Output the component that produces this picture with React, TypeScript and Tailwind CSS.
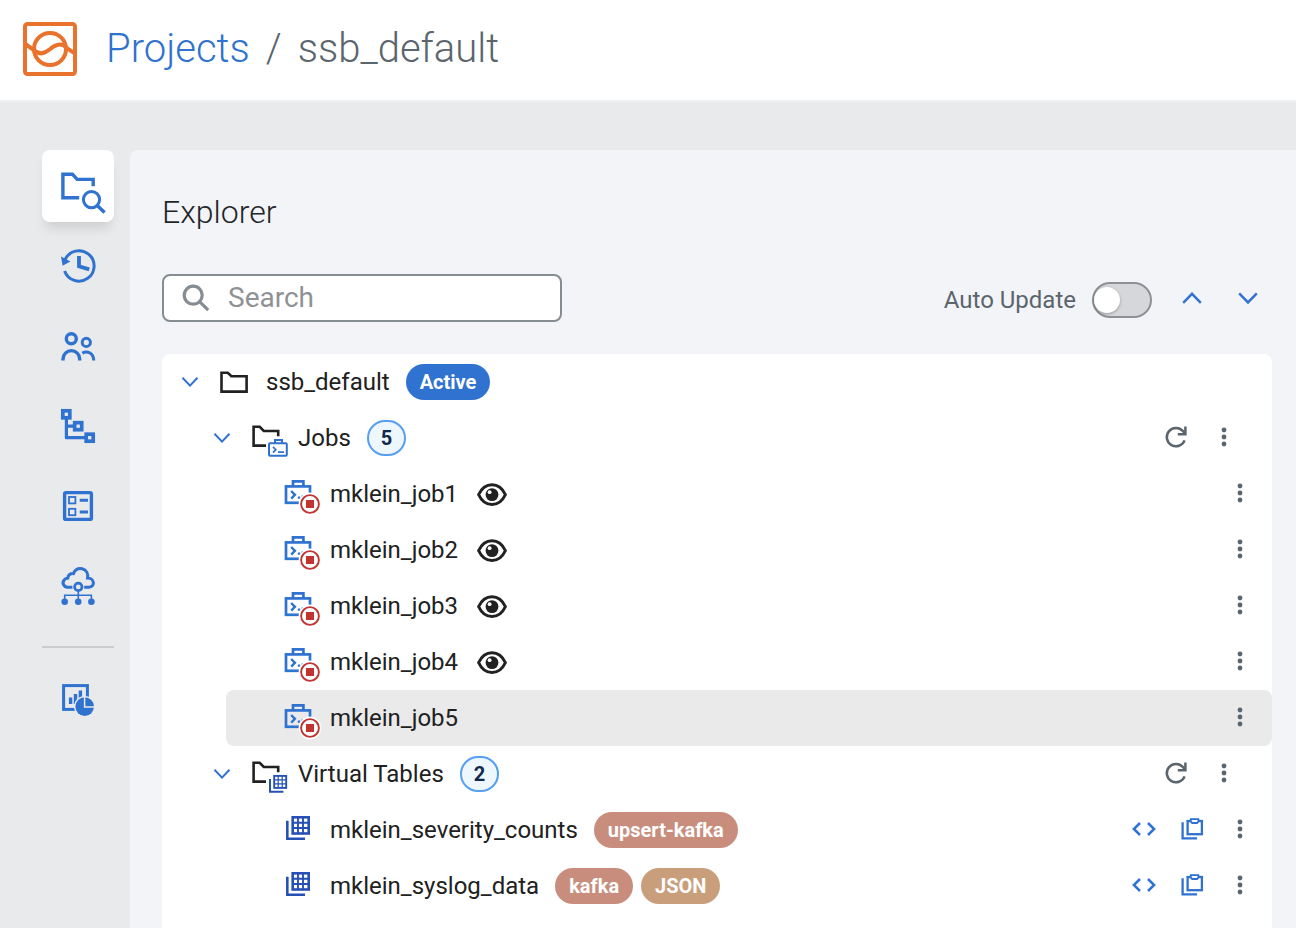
import { useState, type ReactNode } from "react";

function Logo() {
  return (
    <svg className="size-[54px] shrink-0" viewBox="0 0 54 54" fill="none" stroke="#e9722c" strokeWidth="4" aria-hidden="true">
      <rect x="2" y="2" width="50" height="50" rx="2.5" />
      <circle cx="27" cy="27" r="16" />
      <path d="M3 22.5L10.5 27.8C15.5 32.6 21 32.3 26.5 27.6C31 23 39 19.5 44 26.2L51 30.8" />
    </svg>
  );
}

function NavSvg({ children }: { children: ReactNode }) {
  return (
    <svg className="size-[72px]" viewBox="0 0 72 72" fill="none" stroke="currentColor" strokeWidth="3.4" aria-hidden="true">
      {children}
    </svg>
  );
}

const navItems: { label: string; icon: ReactNode }[] = [
  {
    label: "Explorer",
    icon: (
      <NavSvg>
        <path d="M37.2 47.8H20.9V24.2H30.4L35.2 29.4H51.2V36.2" />
        <circle cx="49.5" cy="49.6" r="8.1" strokeWidth="3" />
        <path d="M55.2 55.4L62.6 62.4" />
      </NavSvg>
    ),
  },
  {
    label: "History",
    icon: (
      <NavSvg>
        <path d="M23 29.8A15.2 15.2 0 1 1 22.6 41" strokeWidth="3" />
        <path d="M19 26.4L20.6 35.8L28.4 31.5Z" fill="currentColor" stroke="none" />
        <path d="M37 26V36.3L47.2 39.4" strokeWidth="3.8" />
      </NavSvg>
    ),
  },
  {
    label: "Teams",
    icon: (
      <NavSvg>
        <circle cx="29.3" cy="28.7" r="5" />
        <path d="M21 50.5V49A8.3 8.3 0 0 1 37.7 49V50.5" />
        <circle cx="44.3" cy="32.4" r="4.1" strokeWidth="3" />
        <path d="M40.3 43.1C45.5 40.3 51.7 43 51.7 50.5" strokeWidth="3" />
      </NavSvg>
    ),
  },
  {
    label: "Lineage",
    icon: (
      <NavSvg>
        <path d="M24.4 28V47.7H44M24.4 36.1H32" strokeWidth="3.2" strokeLinejoin="round" />
        <rect x="20.8" y="20.8" width="7" height="7" strokeWidth="3.7" />
        <rect x="32.7" y="32.7" width="7" height="7" strokeWidth="3.7" />
        <rect x="44.2" y="44.2" width="7" height="7" strokeWidth="3.7" />
      </NavSvg>
    ),
  },
  {
    label: "Materialized views",
    icon: (
      <NavSvg>
        <rect x="22.6" y="22.6" width="26.8" height="26.8" rx="1.5" />
        <rect x="27" y="27" width="6.4" height="6.4" strokeWidth="1.8" />
        <rect x="27" y="38.8" width="6.4" height="6.4" strokeWidth="1.8" />
        <path d="M37.7 30.2H46M37.7 42H46" strokeWidth="3" />
      </NavSvg>
    ),
  },
  {
    label: "Data sources",
    icon: (
      <NavSvg>
        <path
          d="M30.4 37.2H25.2C21.6 36.6 19.8 33 22 30.2C22.9 28.9 24.2 28.2 25.8 28C26 25 28.5 23.3 31.4 23.6C33.2 19.6 36.6 18 40.2 18.8C44.4 19.8 46.3 23.8 45.6 28C48.6 28 51.4 30 51.4 33C51.2 35.6 49.6 37 47 37.2H42.2"
          strokeWidth="3.1"
        />
        <circle cx="36.3" cy="36.9" r="3.7" strokeWidth="2.7" />
        <path d="M36.3 41V51M22.7 51V45.2H49.4V51" strokeWidth="1.6" />
        <g fill="currentColor" stroke="none">
          <circle cx="22.7" cy="51.8" r="3.3" />
          <circle cx="36.2" cy="51.8" r="3.3" />
          <circle cx="49.4" cy="51.8" r="3.3" />
        </g>
      </NavSvg>
    ),
  },
];

function DashboardIcon() {
  return (
    <NavSvg>
      <rect x="21.6" y="21.6" width="23.8" height="23.8" strokeWidth="3" />
      <path d="M28.6 33.4V40M33.5 30V40M38.4 26.6V40" strokeWidth="3.4" />
      <circle cx="42.7" cy="42.6" r="10.6" fill="#e9eaec" stroke="none" />
      <circle cx="42.7" cy="42.6" r="9.3" fill="currentColor" stroke="none" />
      <path d="M42.6 32.6V43H53" stroke="#e9eaec" strokeWidth="1.5" />
    </NavSvg>
  );
}

function ChevronDown() {
  return (
    <svg className="size-6" viewBox="0 0 24 24" fill="none" stroke="#2f72cf" strokeWidth="2" aria-hidden="true">
      <path d="M4.5 7.8L12 15.6L19.5 7.8" />
    </svg>
  );
}

function FolderIcon() {
  return (
    <svg className="size-8 shrink-0" viewBox="0 0 32 32" fill="none" stroke="#212121" strokeWidth="2.6" aria-hidden="true">
      <path d="M3.5 6.7H9.8L13.4 10.2H28.6V25.6H3.5Z" />
    </svg>
  );
}

function JobsFolderIcon() {
  return (
    <svg className="size-10 shrink-0" viewBox="0 0 40 40" fill="none" aria-hidden="true">
      <path d="M16 27.6H3.6V8.8H9.7L13.8 13H28.2V18.2" stroke="#212121" strokeWidth="2.6" />
      <g stroke="#2f72cf" strokeWidth="2">
        <rect x="19" y="25.3" width="17.8" height="12.4" rx="1" />
        <path d="M25 25V22H32V25" />
        <path d="M23 28.8L25.8 31.7L23 34.6M28 34.2H34" strokeWidth="1.7" />
      </g>
    </svg>
  );
}

function TablesFolderIcon() {
  return (
    <svg className="size-10 shrink-0" viewBox="0 0 40 40" fill="none" aria-hidden="true">
      <path d="M16 27.6H3.6V8.8H9.7L13.8 13H28.2V18.2" stroke="#212121" strokeWidth="2.6" />
      <g stroke="#2650b4">
        <path d="M20 25V37.8H33.4" strokeWidth="2" />
        <rect x="24.2" y="21.9" width="12" height="12" strokeWidth="1.9" />
        <path d="M28.2 22V34M32.2 22V34M24 25.9H36M24 29.9H36" strokeWidth="1.2" />
      </g>
    </svg>
  );
}

function StoppedJobIcon() {
  return (
    <svg className="size-10 shrink-0 overflow-visible" viewBox="0 0 40 40" fill="none" aria-hidden="true">
      <g stroke="#2f72cf" strokeWidth="2.7">
        <rect x="4" y="12.4" width="24" height="16.4" />
        <path d="M11 12V7.3H21.4V12" />
        <path d="M9.2 17L12.9 20.8L9.2 24.6" strokeWidth="2.4" />
        <path d="M15.8 23.6H18.2M19.4 22.6H21" strokeWidth="2.4" />
      </g>
      <circle cx="28" cy="30" r="11.4" fill="#fff" />
      <circle cx="28" cy="30" r="8.9" stroke="#c0352f" strokeWidth="1.9" />
      <rect x="24" y="26" width="8" height="8" fill="#c0352f" />
    </svg>
  );
}

function TableIcon() {
  return (
    <svg className="size-10 shrink-0" viewBox="0 0 40 40" fill="none" stroke="#2650b4" aria-hidden="true">
      <path d="M5.3 10.8V28.7H23" strokeWidth="2.6" />
      <rect x="10.7" y="7.3" width="16" height="16.2" strokeWidth="2.6" />
      <path d="M16 7V24M21 7V24M10 12.7H27M10 18H27" strokeWidth="1.9" />
    </svg>
  );
}

function EyeIcon() {
  return (
    <svg className="size-8" viewBox="0 0 32 32" aria-hidden="true">
      <path d="M2.6 16.6C8.8 3.4 23.2 3.4 29.4 16.6C23.2 29.8 8.8 29.8 2.6 16.6Z" fill="none" stroke="#212121" strokeWidth="2.9" />
      <circle cx="16" cy="16.6" r="6.4" fill="#212121" />
      <circle cx="13.6" cy="14.2" r="1.9" fill="#fff" />
    </svg>
  );
}

function ActionSvg({ children }: { children: ReactNode }) {
  return (
    <svg className="size-8" viewBox="0 0 32 32" fill="none" stroke="currentColor" strokeWidth="2.5" aria-hidden="true">
      {children}
    </svg>
  );
}

function ActionButton({ label, tone, children }: { label: string; tone: "gray" | "blue"; children: ReactNode }) {
  return (
    <button
      type="button"
      aria-label={label}
      className={
        tone === "gray"
          ? "flex h-12 w-12 items-center justify-center text-[#5a656d]"
          : "flex h-12 w-12 items-center justify-center text-[#2f72cf]"
      }
    >
      <ActionSvg>{children}</ActionSvg>
    </button>
  );
}

function MoreButton({ name }: { name: string }) {
  return (
    <ActionButton label={`More actions for ${name}`} tone="gray">
      <g fill="currentColor" stroke="none">
        <circle cx="16" cy="8" r="2.4" />
        <circle cx="16" cy="15" r="2.4" />
        <circle cx="16" cy="22" r="2.4" />
      </g>
    </ActionButton>
  );
}

function RefreshButton({ name }: { name: string }) {
  return (
    <ActionButton label={`Refresh ${name}`} tone="gray">
      <path d="M24.6 18.4A9.2 9.2 0 1 1 22.8 8.9L25 11.4" />
      <path d="M25.4 4.4V12.2H17.8" />
    </ActionButton>
  );
}

function CodeButton({ name }: { name: string }) {
  return (
    <ActionButton label={`Show DDL of ${name}`} tone="blue">
      <path d="M12 9L5.9 15L12 21M20 9L26.1 15L20 21" />
    </ActionButton>
  );
}

function CopyButton({ name }: { name: string }) {
  return (
    <ActionButton label={`Copy ${name}`} tone="blue">
      <path d="M6.6 8.2V24.4H21" strokeWidth="2.3" />
      <rect x="11.6" y="7" width="14.3" height="13.2" strokeWidth="2.3" />
      <path d="M14.8 5.2H22.4V7.6L21 9H16.2L14.8 7.6Z" fill="#fff" strokeWidth="1.8" />
    </ActionButton>
  );
}

function Badge({ color, children }: { color: "blue" | "rose" | "tan"; children: ReactNode }) {
  const fill = { blue: "bg-[#2f72cf]", rose: "bg-[#c88d7c]", tan: "bg-[#c99e7b]" }[color];
  return (
    <span className={`${fill} flex h-9 items-center rounded-full px-3.5 text-xl font-bold text-white`}>{children}</span>
  );
}

function CountBadge({ children }: { children: ReactNode }) {
  return (
    <span className="flex h-9 items-center rounded-full border-2 border-[#579ff3] bg-[#eef6fe] px-3 text-xl font-bold text-[#11294d]">
      {children}
    </span>
  );
}

function Group({ name, icon, count, children }: { name: string; icon: ReactNode; count: number; children: ReactNode }) {
  const [open, setOpen] = useState(true);
  return (
    <li className="pl-8">
      <div className="flex h-14 items-center pr-6 pl-4">
        <button type="button" aria-label={`Toggle ${name}`} aria-expanded={open} onClick={() => setOpen(!open)} className="mr-4">
          <ChevronDown />
        </button>
        {icon}
        <span className="mr-4 ml-2">{name}</span>
        <CountBadge>{count}</CountBadge>
        <div className="ml-auto flex">
          <RefreshButton name={name} />
          <MoreButton name={name} />
        </div>
      </div>
      {open && <ul className="pl-8">{children}</ul>}
    </li>
  );
}

const jobs = [
  { name: "mklein_job1", watched: true },
  { name: "mklein_job2", watched: true },
  { name: "mklein_job3", watched: true },
  { name: "mklein_job4", watched: true },
  { name: "mklein_job5", watched: false },
];

const tables: { name: string; tags: { text: string; color: "rose" | "tan" }[] }[] = [
  { name: "mklein_severity_counts", tags: [{ text: "upsert-kafka", color: "rose" }] },
  {
    name: "mklein_syslog_data",
    tags: [
      { text: "kafka", color: "rose" },
      { text: "JSON", color: "tan" },
    ],
  },
];

function Sidebar() {
  return (
    <nav aria-label="Main" className="flex w-[72px] shrink-0 flex-col text-[#2f72cf]">
      <div className="flex flex-col gap-2">
        {navItems.map((item, i) => (
          <a
            key={item.label}
            href="#"
            aria-label={item.label}
            className={i === 0 ? "rounded-lg bg-white shadow-[0_10px_12px_-4px_rgba(0,0,0,0.12)]" : "rounded-lg"}
          >
            {item.icon}
          </a>
        ))}
      </div>
      <hr className="mt-6 mb-4 border-t-2 border-[#cbccce]" />
      <a href="#" aria-label="Dashboards">
        <DashboardIcon />
      </a>
    </nav>
  );
}

function Toolbar() {
  return (
    <div className="mt-[42px] flex items-center justify-between">
      <label className="flex h-12 w-[400px] items-center rounded-lg border-2 border-[#858c92] bg-white pl-4">
        <svg className="size-8 shrink-0" viewBox="0 0 32 32" fill="none" stroke="#858c92" strokeWidth="3.2" aria-hidden="true">
          <circle cx="13.2" cy="13.2" r="9" />
          <path d="M19.6 19.6L28.2 28.2" />
        </svg>
        <input
          type="text"
          aria-label="Search"
          placeholder="Search"
          className="ml-4 w-full min-w-0 bg-transparent text-[28px] leading-9 outline-none placeholder:text-[#8f9294]"
        />
      </label>
      <div className="flex items-center">
        <div className="mr-4 flex items-center gap-4 pt-1">
          <label htmlFor="auto-update" className="text-2xl text-[#5a656d]">
            Auto Update
          </label>
          <input
            id="auto-update"
            type="checkbox"
            role="switch"
            className="flex h-9 w-[60px] appearance-none items-center rounded-full border-2 border-[#8d9196] bg-[#d6d7db] before:size-[26px] before:rounded-full before:bg-white before:shadow-[0_1px_3px_rgba(0,0,0,0.3)] checked:bg-[#2f72cf] checked:before:ml-auto"
          />
        </div>
        <div className="flex gap-2 text-[#2f72cf]">
          <button type="button" aria-label="Collapse all" className="flex size-12 items-center justify-center">
            <ActionSvg>
              <path d="M7.2 20.8L16 11.8L24.8 20.8" />
            </ActionSvg>
          </button>
          <button type="button" aria-label="Expand all" className="flex size-12 items-center justify-center">
            <ActionSvg>
              <path d="M7.2 11.4L16 20.4L24.8 11.4" />
            </ActionSvg>
          </button>
        </div>
      </div>
    </div>
  );
}

function ProjectTree() {
  const [open, setOpen] = useState(true);
  return (
    <ul className="mt-8 flex-1 rounded-t-lg bg-white text-2xl text-[#212121]">
      <li>
        <div className="flex h-14 items-center pl-4">
          <button type="button" aria-label="Toggle ssb_default" aria-expanded={open} onClick={() => setOpen(!open)} className="mr-4">
            <ChevronDown />
          </button>
          <FolderIcon />
          <span className="mx-4">ssb_default</span>
          <Badge color="blue">Active</Badge>
        </div>
        {open && (
          <ul>
            <Group name="Jobs" icon={<JobsFolderIcon />} count={jobs.length}>
              {jobs.map((job) => (
                <li
                  key={job.name}
                  className={
                    job.watched
                      ? "flex h-14 items-center rounded-lg pr-2 pl-14"
                      : "flex h-14 items-center rounded-lg bg-[#eaeaea] pr-2 pl-14"
                  }
                >
                  <StoppedJobIcon />
                  <span className="mr-[18px] ml-2">{job.name}</span>
                  {job.watched && <EyeIcon />}
                  <div className="ml-auto flex">
                    <MoreButton name={job.name} />
                  </div>
                </li>
              ))}
            </Group>
            <Group name="Virtual Tables" icon={<TablesFolderIcon />} count={tables.length}>
              {tables.map((table) => (
                <li key={table.name} className="flex h-14 items-center rounded-lg pr-2 pl-14">
                  <TableIcon />
                  <span className="mr-4 ml-2">{table.name}</span>
                  <div className="flex gap-2">
                    {table.tags.map((tag) => (
                      <Badge key={tag.text} color={tag.color}>
                        {tag.text}
                      </Badge>
                    ))}
                  </div>
                  <div className="ml-auto flex">
                    <CodeButton name={table.name} />
                    <CopyButton name={table.name} />
                    <MoreButton name={table.name} />
                  </div>
                </li>
              ))}
            </Group>
          </ul>
        )}
      </li>
    </ul>
  );
}

export default function App() {
  return (
    <div className="flex min-h-screen flex-col bg-[#e9eaec] font-['Roboto',sans-serif]">
      <header className="flex h-[102px] items-center border-b-2 border-[#eff0f1] bg-white pb-0.5 pl-[23px]">
        <Logo />
        <nav aria-label="Breadcrumb" className="ml-[29px] flex gap-4 text-[40px] leading-12 font-light">
          <a href="#" className="text-[#2f72cf]">
            Projects
          </a>
          <span className="text-[#5a656d]">/</span>
          <span className="text-[#5a656d]">ssb_default</span>
        </nav>
      </header>
      <div className="flex flex-1 gap-4 pt-12 pl-[42px]">
        <Sidebar />
        <main className="flex min-w-0 flex-1 flex-col rounded-tl-lg bg-[#f3f4f7] pt-[42px] pr-6 pl-8">
          <h1 className="text-[32px] leading-10 font-light text-[#1f262b]">Explorer</h1>
          <Toolbar />
          <ProjectTree />
        </main>
      </div>
    </div>
  );
}
